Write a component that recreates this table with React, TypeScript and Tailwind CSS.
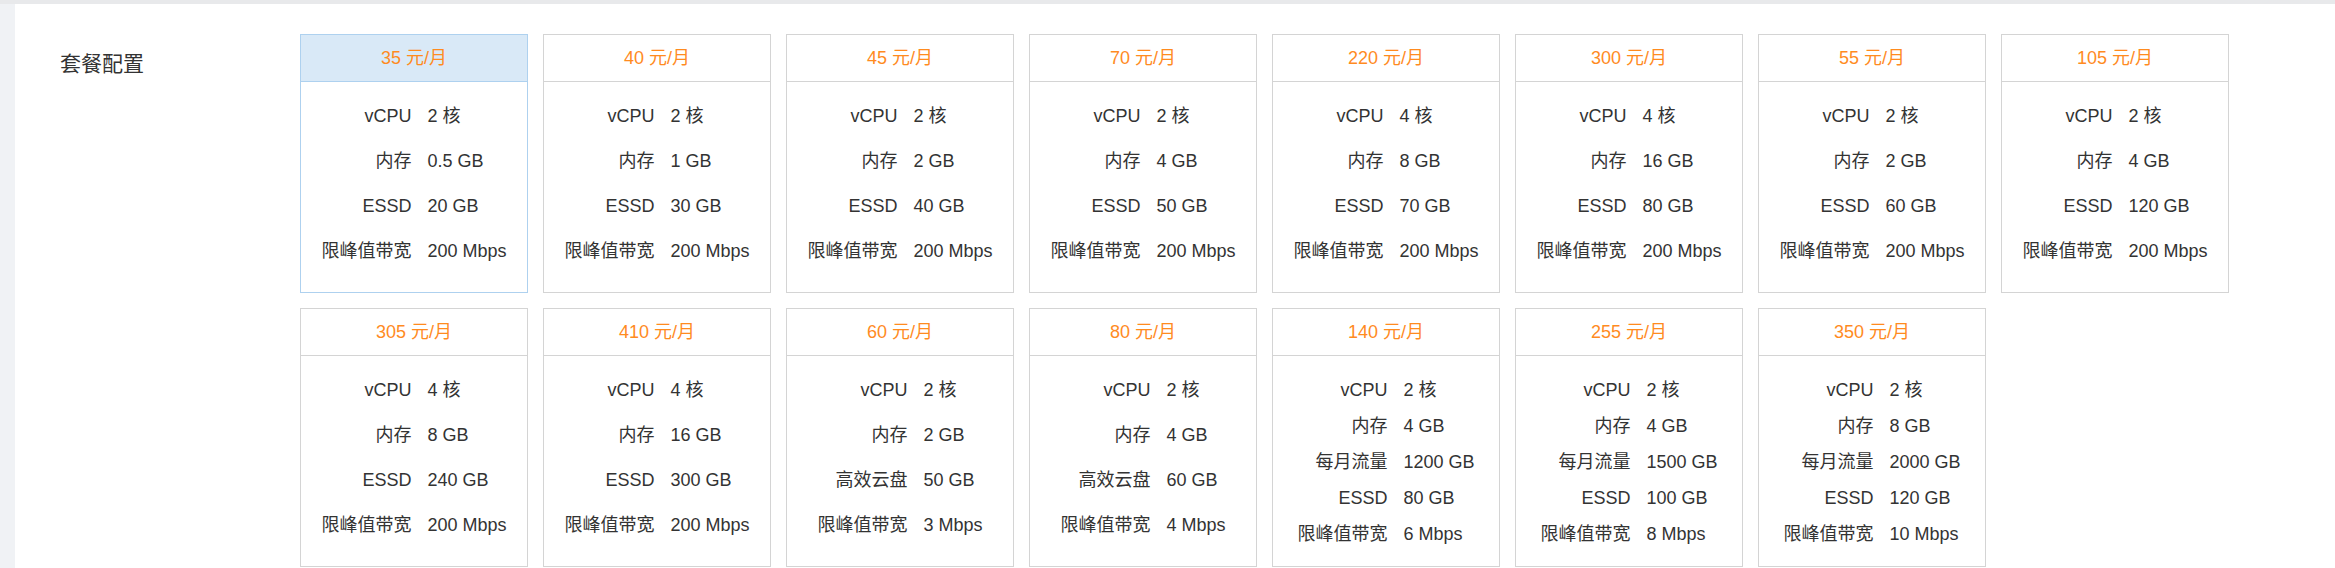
import React from "react";

type Row = [string, string];
type Plan = { price: string; rows: Row[]; selected?: boolean };

const plans: Plan[] = [
  { price: "35", selected: true, rows: [["vCPU", "2 核"], ["内存", "0.5 GB"], ["ESSD", "20 GB"], ["限峰值带宽", "200 Mbps"]] },
  { price: "40", rows: [["vCPU", "2 核"], ["内存", "1 GB"], ["ESSD", "30 GB"], ["限峰值带宽", "200 Mbps"]] },
  { price: "45", rows: [["vCPU", "2 核"], ["内存", "2 GB"], ["ESSD", "40 GB"], ["限峰值带宽", "200 Mbps"]] },
  { price: "70", rows: [["vCPU", "2 核"], ["内存", "4 GB"], ["ESSD", "50 GB"], ["限峰值带宽", "200 Mbps"]] },
  { price: "220", rows: [["vCPU", "4 核"], ["内存", "8 GB"], ["ESSD", "70 GB"], ["限峰值带宽", "200 Mbps"]] },
  { price: "300", rows: [["vCPU", "4 核"], ["内存", "16 GB"], ["ESSD", "80 GB"], ["限峰值带宽", "200 Mbps"]] },
  { price: "55", rows: [["vCPU", "2 核"], ["内存", "2 GB"], ["ESSD", "60 GB"], ["限峰值带宽", "200 Mbps"]] },
  { price: "105", rows: [["vCPU", "2 核"], ["内存", "4 GB"], ["ESSD", "120 GB"], ["限峰值带宽", "200 Mbps"]] },
  { price: "305", rows: [["vCPU", "4 核"], ["内存", "8 GB"], ["ESSD", "240 GB"], ["限峰值带宽", "200 Mbps"]] },
  { price: "410", rows: [["vCPU", "4 核"], ["内存", "16 GB"], ["ESSD", "300 GB"], ["限峰值带宽", "200 Mbps"]] },
  { price: "60", rows: [["vCPU", "2 核"], ["内存", "2 GB"], ["高效云盘", "50 GB"], ["限峰值带宽", "3 Mbps"]] },
  { price: "80", rows: [["vCPU", "2 核"], ["内存", "4 GB"], ["高效云盘", "60 GB"], ["限峰值带宽", "4 Mbps"]] },
  { price: "140", rows: [["vCPU", "2 核"], ["内存", "4 GB"], ["每月流量", "1200 GB"], ["ESSD", "80 GB"], ["限峰值带宽", "6 Mbps"]] },
  { price: "255", rows: [["vCPU", "2 核"], ["内存", "4 GB"], ["每月流量", "1500 GB"], ["ESSD", "100 GB"], ["限峰值带宽", "8 Mbps"]] },
  { price: "350", rows: [["vCPU", "2 核"], ["内存", "8 GB"], ["每月流量", "2000 GB"], ["ESSD", "120 GB"], ["限峰值带宽", "10 Mbps"]] },
];

function Card({ plan }: { plan: Plan }) {
  const five = plan.rows.length === 5;
  return (
    <div
      className={
        plan.selected
          ? "border border-[#aed1ef] bg-white"
          : "border border-[#d4d4d4] bg-white"
      }
    >
      <div
        className={
          plan.selected
            ? "h-[47px] flex items-center justify-center border-b border-[#aed1ef] bg-[#d9e9f7] text-[18px] text-[#ff8b1f]"
            : "h-[47px] flex items-center justify-center border-b border-[#d4d4d4] text-[18px] text-[#ff8b1f]"
        }
      >
        {plan.price} 元/月
      </div>
      <div className={five ? "h-[210px] pt-[16px]" : "h-[210px] pt-[12px]"}>
        <div className="mx-auto w-fit grid grid-cols-[auto_auto] gap-x-[16px] text-[18px] text-[#333]">
          {plan.rows.map(([k, v]) => (
            <React.Fragment key={k}>
              <div className={five ? "text-right leading-[36px]" : "text-right leading-[45px]"}>{k}</div>
              <div className={five ? "text-left leading-[36px]" : "text-left leading-[45px]"}>{v}</div>
            </React.Fragment>
          ))}
        </div>
      </div>
    </div>
  );
}

export default function App() {
  return (
    <div
      className="min-h-[568px] bg-[#f0f2f5] flex flex-col"
      style={{ fontFamily: '"Liberation Sans", Arial, "Noto Sans CJK SC", sans-serif' }}
    >
      <div className="h-[4px] bg-[#e8e9eb]" />
      <div className="flex-1 ml-[15px] bg-white flex pt-[30px] pl-[45px]">
        <div className="w-[240px] shrink-0 mt-[19px] text-[21px] leading-[21px] text-[#333]">套餐配置</div>
        <div className="grid grid-cols-[repeat(8,228px)] gap-[15px] content-start">
          {plans.map((p) => (
            <Card key={p.price} plan={p} />
          ))}
        </div>
      </div>
    </div>
  );
}
